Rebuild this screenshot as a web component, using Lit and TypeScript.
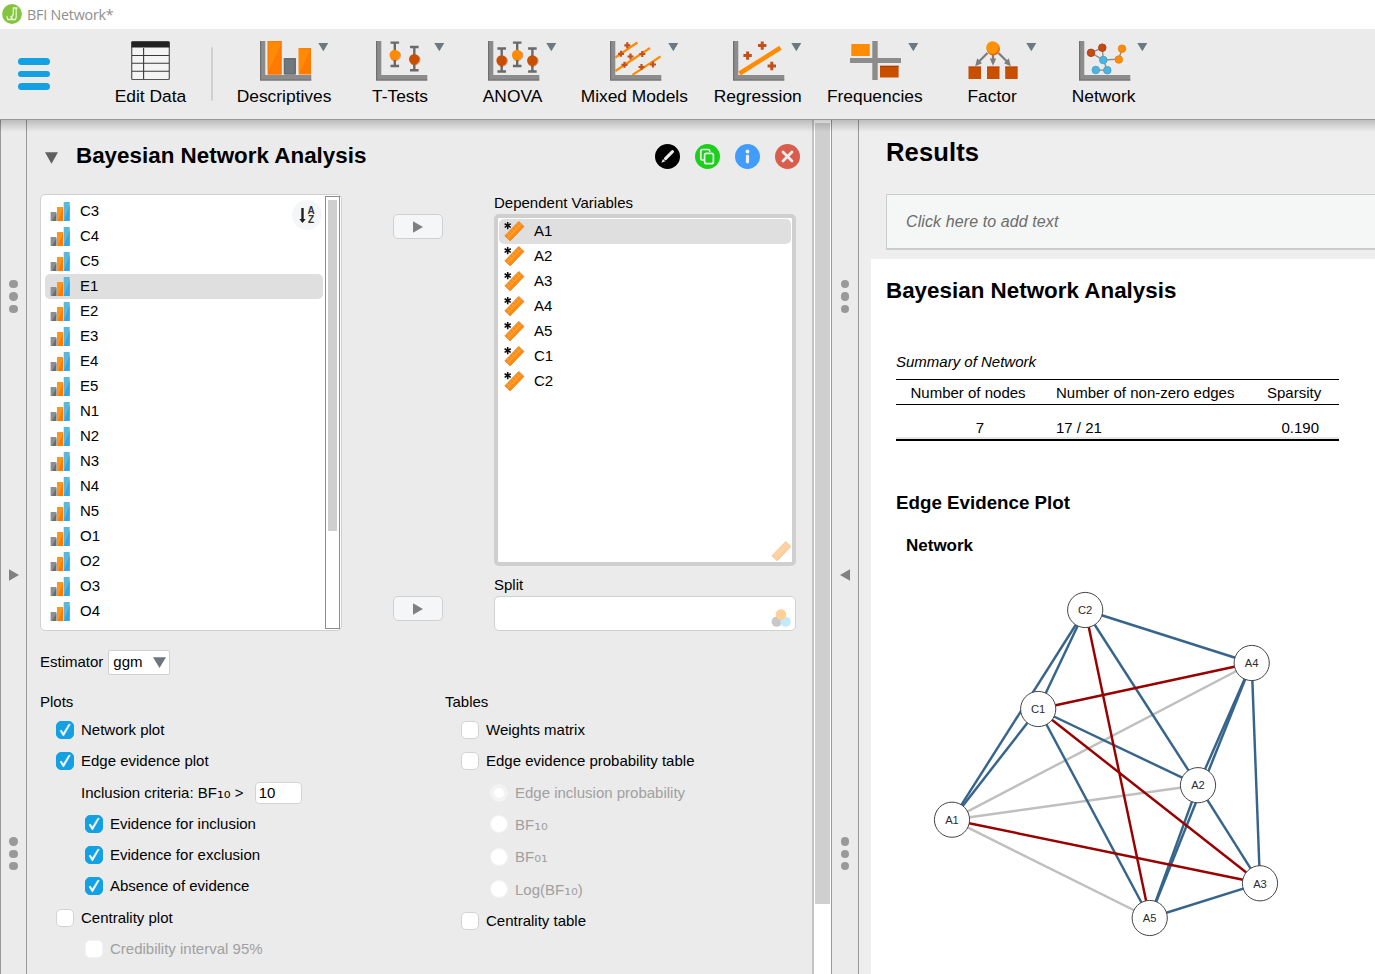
import { LitElement, html, svg, css, nothing } from "lit";
import { customElement, property } from "lit/decorators.js";

const GREY = "#8c8c8c";
const ORANGE = "#ff8c00";
const RUST = "#c94f00";

const axes = svg`<path d="M0 0h5.3v34H51.3v5.6H0z" fill=${GREY}/><path d="M.6 0v39h50.7" fill="none" stroke="#6f6f6f" stroke-width="1.2"/>`;

const whisker = (x: number, y1: number, y2: number, cy: number, fill: string) => svg`
  <path d="M${x - 4.3} ${y1}h8.6M${x - 4.3} ${y2}h8.6M${x} ${y1}V${y2}" stroke="#6a6a6a" stroke-width="2.4" fill="none"/>
  <circle cx=${x} cy=${cy} r="5.3" fill=${fill}/>
  <path d="M${x - 4} ${cy + 3.6}a5.3 5.3 0 0 0 8.6 -6.6" fill="none" stroke="#a83c00" stroke-opacity=".45" stroke-width="1"/>`;

const plus = (x: number, y: number, s: number, w: number) => svg`
  <path d="M${x - s} ${y}h${2 * s}M${x} ${y - s}v${2 * s}" stroke="#c2501a" stroke-width=${w} fill="none"/>`;

const dot = (x: number, y: number, fill: string, stroke: string) => svg`
  <circle cx=${x} cy=${y} r="3.8" fill=${fill} stroke=${stroke} stroke-width=".8"/>`;

const icons: Record<string, unknown> = {
  descriptives: svg`${axes}
    <path d="M7.7 0h14v33.5H7.7zM38.7 7H51v26.5H38.7z" fill="#ff7a00"/>
    <path d="M7.7 0h14v2L9.5 28H7.7zM38.7 7H51L40.5 30h-1.8z" fill="#ff8a06"/>
    <path d="M8.5 .6h12.4v32.6H8.5zM39.5 7.8H50.8" fill="none" stroke="#ff6a00" stroke-opacity=".4" stroke-width="1.4"/>
    <path d="M23.7 17h12.3v16.5H23.7z" fill="#6f787e"/><path d="M24.7 18h10.3v15H24.7z" fill="none" stroke="#5f696f" stroke-width="1"/>`,
  ttests: svg`${axes}${whisker(18.8, 1.6, 25, 14, ORANGE)}${whisker(38.3, 6, 29.2, 18.3, RUST)}`,
  anova: svg`${axes}${whisker(13.7, 7.5, 30.5, 19.6, RUST)}${whisker(29.2, 1.6, 25, 14, ORANGE)}${whisker(44.4, 7.5, 30.5, 19.6, RUST)}`,
  mixed: svg`${axes}
    <path d="M5.4 16.5L27.3 1.5M5.4 30L40 7M22.5 33.8L50.5 15.5" stroke=${ORANGE} stroke-width="2.2" fill="none"/>
    ${plus(17.3, 4.3, 3, 2.2)}${plus(11, 12.8, 3, 2.2)}${plus(20.5, 15.5, 3, 2.2)}${plus(32.3, 13, 3, 2.2)}${plus(14.5, 23.8, 3, 2.2)}${plus(31.5, 26, 3, 2.2)}${plus(43, 23.5, 3, 2.2)}`,
  regression: svg`${axes}
    <path d="M6.500 32.500L47.500 6.800" stroke=${ORANGE} stroke-width="4.600" fill="none"/>
    ${plus(14.6, 14.6, 4.2, 3)}${plus(29.2, 4.6, 4.2, 3)}${plus(38.8, 25, 4.2, 3)}`,
  frequencies: svg`
    <path d="M22.300 0h5.400v39h-5.400z" fill=${GREY}/><path d="M0 17h51v5H0z" fill=${GREY}/>
    <path d="M1.300 3h18.500v12H1.300z" fill=${ORANGE}/><path d="M30 24.800h18.600v11.700H30z" fill=${RUST}/>
    <path d="M30 25.400h18.600" stroke="#a83c00" stroke-width="1.200"/>`,
  factor: svg`
    <path d="M19.500 12L10 21.500M25 13v8.500M30.500 12L40 21.500" stroke="#7d7d7d" stroke-width="2.200" fill="none"/>
    <path d="M7.200 25.300l2-8 4.800 5zM42.800 25.300l-2-8-4.800 5zM21.800 17.500h6.400l-3.200 7.200z" fill="#7d7d7d"/>
    <circle cx="25.300" cy="7.800" r="6.700" fill="#e86a00"/><circle cx="24.500" cy="6.500" r="6.300" fill="#ff9208"/>
    <path d="M.5 25.500H13V38H.5zM19 25.500h12.500V38H19zM37.200 25.500h12.500V38H37.200z" fill=${RUST}/>
    <path d="M.5 26H13M19 26h12.500M37.200 26h12.500" stroke="#a83c00" stroke-opacity=".6"/>`,
  network: svg`${axes}
    <path d="M12 11.800L23.300 6.700 24.300 19zM24.300 19l15.500-.8L43 7.700M24.300 19l4 10.200H16.800" stroke="#8a8a8a" stroke-width="1.300" fill="none"/>
    ${dot(12, 11.8, "#c94a10", "#a33a0a")}${dot(23.3, 6.7, "#c94a10", "#a33a0a")}${dot(43, 7.7, "#ff8c08", "#e87c10")}${dot(39.8, 18.5, "#ff8c08", "#e87c10")}
    ${dot(24.3, 19, "#4fb3dd", "#3aa0cc")}${dot(16.8, 29, "#4fb3dd", "#3aa0cc")}${dot(28.3, 29.2, "#4fb3dd", "#3aa0cc")}`,
};

const ribbon = [
  { id: "descriptives", label: "Descriptives" },
  { id: "ttests", label: "T-Tests" },
  { id: "anova", label: "ANOVA" },
  { id: "mixed", label: "Mixed Models" },
  { id: "regression", label: "Regression" },
  { id: "frequencies", label: "Frequencies" },
  { id: "factor", label: "Factor" },
  { id: "network", label: "Network" },
];

@customElement("ribbon-bar")
export class RibbonBar extends LitElement {
  static styles = css`
    :host { display: flex; box-sizing: border-box; height: 91px; background: #ebebeb; border-bottom: 1px solid #989898; font: 17.4px/20px "Liberation Sans", Arial, sans-serif; color: #000; }
    .menu { width: 32px; padding: 29px 0 0 18px; display: flex; flex-direction: column; gap: 6px; }
    .menu span { height: 6.5px; border-radius: 4px; background: #14a1e3; }
    .edit { width: 120px; margin-left: 40.5px; }
    .sep { width: 2.5px; height: 54px; margin: 18px 13.3px 0 0; background: #d0d0d0; border-radius: 1px; }
    .item { display: flex; flex-direction: column; align-items: center; padding-top: 12px; white-space: nowrap; box-sizing: border-box; }
    .items { display: grid; grid-template-columns: 115.5px 116.5px 108.5px 135px 112px 122px 112.500px 110.5px; }
    svg { display: block; width: 50px; height: 40px; overflow: visible; margin-bottom: 5px; }
    .items svg { margin-left: 1px; }
    .table { width: 39px; }
  `;
  render() {
    return html`
      <div class="menu"><span></span><span></span><span></span></div>
      <div class="item edit">
        <svg class="table" viewBox="0 0 39 40">
          <rect x=".7" y=".7" width="37.600" height="37.800" rx="1" fill="#f4f4f4" stroke="#555" stroke-width="1.200"/>
          <path d="M.5 .8h38v5.800H.5z" fill="#222"/>
          <path d="M1 14.500h37M1 22.300h37M1 30.300h37M12.600 7v31" stroke="#3a3a3a" stroke-width="1.100" fill="none"/>
        </svg>
        <span>Edit Data</span>
      </div>
      <div class="sep"></div>
      <div class="items">
        ${ribbon.map((r) => html`<div class="item">
          <svg viewBox="0 0 50 40">${icons[r.id]}<path d="M58.300 2h10l-5 8.200z" fill="#6b7a82"/></svg>
          <span>${r.label}</span>
        </div>`)}
      </div>`;
  }
}

@customElement("split-handle")
export class SplitHandle extends LitElement {
  @property() dir = "right";
  static styles = css`
    :host { display: flex; flex-direction: column; align-items: center; box-sizing: border-box; width: 27px; border-left: 1px solid #989898; border-right: 1px solid #989898; background: #ebebeb; padding-top: 160px; }
    .dots { display: flex; flex-direction: column; gap: 4px; }
    .dots i { width: 8.4px; height: 8.4px; border-radius: 50%; background: #999; }
    svg { display: block; width: 10px; height: 12px; margin: 255.5px 0 256.5px; }
  `;
  render() {
    const dots = html`<div class="dots"><i></i><i></i><i></i></div>`;
    return html`${dots}
      <svg viewBox="0 0 10 12"><path d=${this.dir === "right" ? "M0 0.300l10 5.700-10 5.700z" : "M10 .3L0 6l10 5.700z"} fill="#808080"/></svg>
      ${dots}`;
  }
}

const ordinal = html`<svg class="ico" width="20" height="19" viewBox="0 0 20 19">
  <path d="M.6 10h5.800v9H.6z" fill="#8b8f92"/><path d="M6.400 11v8H2z" fill="#656d73"/>
  <path d="M7 5h6.100v14H7z" fill="#ff9518"/><path d="M13.100 6v13H8z" fill="#ff7b00"/>
  <path d="M13.700 0h6v19h-6z" fill="#5ab8dc"/><path d="M19.700 3v16h-6z" fill="#35a5e5"/></svg>`;

const rulerShape = svg`<g transform="rotate(-46 10.200 10.200)">
  <path d="M.4 6.700h20v7.300H.4z" fill="#ff8c0e" stroke="#d98a3a" stroke-width=".8"/>
  <path d="M3.500 6.900v3.200M6.800 6.900v3.200M10.200 6.900v3.200M13.600 6.900v3.200M17 6.900v3.200M1 10.400h18.800" stroke="#ffc98a" stroke-width=".5" fill="none"/></g>`;

const scale = html`<svg class="ico" width="21" height="20" viewBox="0 0 21 20">${rulerShape}
  <path d="M3.700 1v7.200M.6 2.800l6.200 3.600M6.800 2.800L.6 6.400" stroke="#fff" stroke-opacity=".7" stroke-width="2.600"/>
  <path d="M3.700 1v7.200M.6 2.800l6.200 3.600M6.800 2.800L.6 6.400" stroke="#111" stroke-width="1.600"/></svg>`;

const arrow = html`<button class="move"><svg width="10" height="12" viewBox="0 0 10 12"><path d="M0 .3L10 6 0 11.700z" fill="#808080"/></svg></button>`;

interface Opt { text: unknown; indent?: boolean; kind?: "check" | "radio" | "none"; on?: boolean; off?: boolean; }
const sub = (t: string) => html`<span class="sub">${t}</span>`;

const plots: Opt[] = [
  { text: "Network plot", on: true },
  { text: "Edge evidence plot", on: true },
  { text: html`Inclusion criteria: BF${sub("₁₀")} &gt; <span class="field">10</span>`, kind: "none" },
  { text: "Evidence for inclusion", on: true, indent: true },
  { text: "Evidence for exclusion", on: true, indent: true },
  { text: "Absence of evidence", on: true, indent: true },
  { text: "Centrality plot" },
  { text: "Credibility interval 95%", indent: true, off: true },
];
const tables: Opt[] = [
  { text: "Weights matrix" },
  { text: "Edge evidence probability table" },
  { text: "Edge inclusion probability", kind: "radio", on: true, indent: true, off: true },
  { text: html`BF${sub("₁₀")}`, kind: "radio", indent: true, off: true },
  { text: html`BF${sub("₀₁")}`, kind: "radio", indent: true, off: true },
  { text: html`Log(BF${sub("₁₀")})`, kind: "radio", indent: true, off: true },
  { text: "Centrality table" },
];

@customElement("analysis-form")
export class AnalysisForm extends LitElement {
  static styles = css`
    :host { display: block; box-sizing: border-box; width: 785px; padding-left: 13px; background: #ebebeb; font: 15px/16px "Liberation Sans", Arial, sans-serif; color: #000; white-space: nowrap; }
    .head { display: flex; align-items: center; height: 74px; width: 760px; }
    .head h1 { font-size: 22.4px; line-height: 26px; margin: 0 auto 0 18px; padding-bottom: 3px; }
    .head .tri { margin-left: 5px; margin-top: 1px; }
    .tools { display: flex; gap: 15px; padding-bottom: 1px; }
    .tools svg { display: block; }
    .vars { display: grid; grid-template-columns: 302px 50px 302px; column-gap: 51px; height: 437px; }
    .list { display: flex; box-sizing: border-box; background: #fff; border: 1px solid #d0d0d0; border-radius: 5px; height: 437px; }
    .rows { flex: 1; padding: 4px 2px 0 4px; position: relative; }
    .row { display: flex; align-items: center; height: 25px; border-radius: 5px; box-sizing: border-box; padding-left: 5px; gap: 10px; }
    .row span { padding-bottom: 2px; }
    .row.sel { background: #dfdfdf; }
    .sort { position: absolute; right: 3px; top: 5px; display: block; }
    .bar { box-sizing: border-box; width: 15px; height: 433px; margin: 1px 1px 0 0; border: 1px solid #8d8d8d; padding: 3px 2px; }
    .bar i { display: block; height: 331px; background: #cfcfcf; }
    .mid { display: flex; flex-direction: column; justify-content: space-between; padding: 20px 0 10px; }
    .move { display: flex; align-items: center; justify-content: center; width: 50px; height: 25px; box-sizing: border-box; background: #f5f6f8; border: 1px solid #d0d0d0; border-radius: 5px; padding: 0 1px 0 0; }
    .label { padding-top: 1px; height: 15px; }
    .dep { display: flex; flex-direction: column; box-sizing: border-box; height: 352px; margin: 4px 0 11px; padding: 1px; background: #fff; border: 4px solid #cfcfcf; border-radius: 5px; }
    .dep .row { gap: 9px; }
    .dep .row svg { margin-bottom: 2px; }
    .faded { opacity: .42; margin: auto 0 0 auto; display: block; }
    .split { box-sizing: border-box; height: 35px; margin-top: 3px; display: flex; justify-content: flex-end; align-items: flex-end; padding: 0 4px 3px; background: #fff; border: 1px solid #d0d0d0; border-radius: 5px; }
    .est { display: flex; align-items: center; gap: 5px; margin: 19px 0; height: 25px; }
    .est span { padding-bottom: 1px; }
    .select { display: flex; align-items: center; justify-content: space-between; box-sizing: border-box; width: 62px; height: 25px; padding: 0 3px 0 4px; background: #fff; border: 1px solid #d0d0d0; border-radius: 2px; }
    .opts { display: grid; grid-template-columns: 405px 1fr; }
    .group { padding: 4.500px 0 0 16px; }
    .opt { display: flex; align-items: center; height: 31.250px; gap: 7px; }
    .opt.in { padding-left: 29px; }
    .opt.none { padding-left: 25px; }
    .opt.tall { height: 32.300px; }
    .opt.tall .text { padding-top: 1.500px; }
    .off { color: #a0a0a0; }
    .box { box-sizing: border-box; width: 18px; height: 18px; border-radius: 5px; border: 1px solid #d3d3d3; background: #fff; }
    .box.on { background: #14a1e3; border-color: #14a1e3; }
    .off .box { border-color: #f4f4f4; }
    .box.radio { border-radius: 50%; }
    .box.radio.on { background: #fff; border: 4px solid #f3f3f3; }
    .box svg { display: block; width: 16px; height: 16px; }
    .sub { font: 17px/0 "DejaVu Sans", sans-serif; vertical-align: 0; }
    .field { display: inline-block; box-sizing: border-box; width: 47px; height: 22px; line-height: 20px; margin-left: 7px; padding-left: 3px; background: #fff; border: 1px solid #d3d3d3; border-radius: 4px; }
  `;

  private opt(o: Opt) {
    const kind = o.kind ?? "check";
    const tall = kind === "radio" && !o.on;
    return html`<div class="opt ${o.indent ? "in" : ""} ${kind} ${o.off ? "off" : ""} ${tall ? "tall" : ""}">
      ${kind === "none" ? nothing : html`<span class="box ${kind} ${o.on ? "on" : ""}">${o.on && kind === "check"
        ? html`<svg viewBox="0 0 16 16"><path d="M3 8.800L4.400 8 6.300 10.900 11.700 2.300H13.400L6.800 13.800H6z" fill="#fff" stroke="#fff" stroke-width=".4"/></svg>` : nothing}</span>`}
      <span class="text">${o.text}</span></div>`;
  }

  render() {
    const left = ["C3", "C4", "C5", "E1", "E2", "E3", "E4", "E5", "N1", "N2", "N3", "N4", "N5", "O1", "O2", "O3", "O4"];
    const right = ["A1", "A2", "A3", "A4", "A5", "C1", "C2"];
    return html`
      <div class="head">
        <svg class="tri" width="13" height="12" viewBox="0 0 13 12"><path d="M0 .3h13L6.500 11.700z" fill="#606060"/></svg>
        <h1>Bayesian Network Analysis</h1>
        <div class="tools">
          <svg width="25" height="25" viewBox="0 0 25 25"><circle cx="12.500" cy="12.500" r="12.500" fill="#000"/>
            <path d="M17.500 7.600L10.500 14.600" stroke="#eee" stroke-width="3" stroke-linecap="round"/><path d="M8 15l2.300 2.300L6.300 18.800z" fill="#eee"/></svg>
          <svg width="25" height="25" viewBox="0 0 25 25"><circle cx="12.500" cy="12.500" r="12.500" fill="#1bd01b"/>
            <path d="M9 16H7.500Q5.800 16 5.800 14.300V7.300Q5.800 5.500 7.500 5.500H13Q14.800 5.500 14.800 7.300V8" fill="none" stroke="#eee" stroke-width="1.700"/>
            <rect x="9.600" y="9.300" width="8.800" height="10.400" rx="2" fill="#1bd01b" stroke="#eee" stroke-width="1.700"/></svg>
          <svg width="25" height="25" viewBox="0 0 25 25"><circle cx="12.500" cy="12.500" r="12.500" fill="#429cfb"/>
            <circle cx="12.500" cy="7.500" r="1.900" fill="#eee"/><path d="M12.500 12v5.800" stroke="#eee" stroke-width="3.200" stroke-linecap="round"/></svg>
          <svg width="25" height="25" viewBox="0 0 25 25"><circle cx="12.500" cy="12.500" r="12.500" fill="#d95c4c"/>
            <path d="M8 8l9 9M17 8l-9 9" stroke="#eee" stroke-width="2.800" stroke-linecap="round"/></svg>
        </div>
      </div>
      <div class="vars">
        <div class="list">
          <div class="rows">
            ${left.map((v) => html`<div class="row ${v === "E1" ? "sel" : ""}">${ordinal}<span>${v}</span></div>`)}
            <svg class="sort" width="30" height="30" viewBox="0 0 30 30"><circle cx="15" cy="15" r="15" fill="#f5f6f8"/>
              <path d="M10.500 8v12" stroke="#222" stroke-width="2.400"/><path d="M7.300 19h6.400l-3.200 4z" fill="#222"/>
              <text x="19" y="14.300" text-anchor="middle" font-size="10" font-weight="bold" fill="#333">A</text><text x="19" y="23" text-anchor="middle" font-size="10" font-weight="bold" fill="#333">Z</text></svg>
          </div>
          <div class="bar"><i></i></div>
        </div>
        <div class="mid">${arrow}${arrow}</div>
        <div>
          <div class="label">Dependent Variables</div>
          <div class="dep">
            ${right.map((v) => html`<div class="row ${v === "A1" ? "sel" : ""}">${scale}<span>${v}</span></div>`)}
            <svg class="faded" width="20" height="20" viewBox="0 0 20 20">${rulerShape}</svg>
          </div>
          <div>Split</div>
          <div class="split"><svg width="20" height="18" viewBox="0 0 20 18">
            <circle cx="5.700" cy="12.600" r="5.200" fill="#c8c8c8"/><circle cx="14.600" cy="12.600" r="5.200" fill="#c2eafd"/><circle cx="10" cy="5.500" r="5.300" fill="#ffcf96"/></svg></div>
        </div>
      </div>
      <div class="est"><span>Estimator</span><div class="select"><span>ggm</span><svg width="13" height="11" viewBox="0 0 13 11"><path d="M0 .3h13L6.500 11z" fill="#6b7780"/></svg></div></div>
      <div class="opts">
        <div><div>Plots</div><div class="group">${plots.map((o) => this.opt(o))}</div></div>
        <div><div>Tables</div><div class="group">${tables.map((o) => this.opt(o))}</div></div>
      </div>`;
  }
}

const nodes: Record<string, [number, number]> = {
  C2: [214.2, 610], A4: [380.7, 663], C1: [167.2, 709], A2: [327, 785.2], A1: [81, 819.7], A3: [389, 883.3], A5: [278.7, 918],
};
const BLUE = "#36648b", RED = "#990000", SILVER = "#bfbfbf";
const edges: [string, string, string][] = [
  ["A1", "A4", SILVER], ["A1", "A2", SILVER], ["A1", "A5", SILVER],
  ["C2", "C1", BLUE], ["C2", "A1", BLUE], ["C1", "A1", BLUE], ["C2", "A4", BLUE], ["C2", "A2", BLUE], ["C1", "A2", BLUE],
  ["C1", "A5", BLUE], ["A4", "A2", BLUE], ["A4", "A5", BLUE], ["A4", "A3", BLUE], ["A2", "A3", BLUE], ["A2", "A5", BLUE], ["A5", "A3", BLUE],
  ["C1", "A4", RED], ["C2", "A5", RED], ["C1", "A3", RED], ["A1", "A3", RED],
];

@customElement("results-pane")
export class ResultsPane extends LitElement {
  static styles = css`
    :host { display: block; box-sizing: border-box; background: #eee; padding-left: 12px; font: 15px/18px "Liberation Sans", Arial, sans-serif; color: #000; white-space: nowrap; overflow: hidden; }
    h1 { font-size: 25.6px; line-height: 30px; margin: 0; padding: 17px 0 27px 15px; letter-spacing: .1px; }
    .note { box-sizing: border-box; height: 56px; margin: 0 0 9px 15px; padding-left: 19px; line-height: 53px; font-size: 16px; letter-spacing: .1px; font-style: italic; color: #6c6c6c; background: #f5f7f6; border: 1px solid #ccc; border-bottom-width: 2px; border-right: 0; }
    .sheet { background: #fff; height: 715px; padding: 18px 0 0 15px; box-sizing: border-box; }
    h2 { font-size: 22.4px; line-height: 28px; margin: 0 0 48px; }
    .summary { width: 443px; margin-left: 10px; border-collapse: collapse; table-layout: fixed; }
    caption { text-align: left; font-style: italic; padding-bottom: 8px; }
    th { font-weight: normal; height: 23px; padding: 1px 0 0; border-top: 1px solid #000; border-bottom: 1px solid #000; text-align: left; }
    td { height: 18px; padding: 14px 0 0; }
    .pad td { height: 2px; padding: 0; background: #e6e6e6; border-bottom: 2px solid #000; }
    th:nth-child(1) { width: 160px; box-sizing: border-box; padding-left: 14.500px; }
    th:nth-child(2) { width: 211px; }
    td.n { text-align: right; padding-right: 72px; }
    td.s { text-align: right; padding-right: 20px; }
    h3 { font-size: 18.750px; line-height: 22px; margin: 51px 0 22px 10px; }
    h4 { font-size: 17px; line-height: 20px; margin: 0 0 0 20px; }
    svg { display: block; margin: 24px 0 0 -15px; }
  `;
  render() {
    return html`
      <h1>Results</h1>
      <div class="note">Click here to add text</div>
      <div class="sheet">
        <h2>Bayesian Network Analysis</h2>
        <table class="summary">
          <caption>Summary of Network</caption>
          <thead><tr><th>Number of nodes</th><th>Number of non-zero edges</th><th>Sparsity</th></tr></thead>
          <tbody><tr><td class="n">7</td><td>17 / 21</td><td class="s">0.190</td></tr>
          <tr class="pad"><td colspan="3"></td></tr></tbody>
        </table>
        <h3>Edge Evidence Plot</h3>
        <h4>Network</h4>
        <svg width="500" height="380" viewBox="0 580 500 380">
          ${edges.map(([a, b, c]) => svg`<line x1=${nodes[a][0]} y1=${nodes[a][1]} x2=${nodes[b][0]} y2=${nodes[b][1]} stroke=${c} stroke-width="2.450"/>`)}
          ${Object.entries(nodes).map(([k, [x, y]]) => svg`<circle cx=${x} cy=${y} r="17.600" fill="#fff" stroke="#444" stroke-width="1"/>
            <text x=${x} y=${y + 4.2} text-anchor="middle" font-size="11.200" fill="#2b2b2b">${k}</text>`)}
        </svg>
      </div>`;
  }
}

@customElement("app-root")
export class AppRoot extends LitElement {
  static styles = css`
    :host { display: flex; flex-direction: column; width: 1375px; height: 974px; overflow: hidden; background: #fff; }
    .title { display: flex; align-items: center; gap: 5px; height: 29px; padding-left: 2px; font: 14.300px/20px "Open Sans", "Noto Sans", sans-serif; letter-spacing: -.22px; color: #8f8f8f; }
    .title svg { margin-bottom: 2px; }
    .work { position: relative; flex: 1; display: grid; grid-template-columns: 27px 785px 19px 28px 1fr; grid-template-rows: 854px; }
    .shade { position: absolute; left: 0; right: 0; top: 0; height: 12px; background: linear-gradient(rgba(0, 0, 0, .2), rgba(0, 0, 0, 0)); }
    .scroll { box-sizing: border-box; background: #fff; border-left: 2px solid #c4c4c4; padding: 3px 1px 0; }
    .scroll i { display: block; height: 781px; background: #cfcfcf; }
    split-handle.wide { width: 28px; }
  `;
  render() {
    return html`
      <div class="title">
        <svg width="20" height="20" viewBox="0 0 20 20"><circle cx="10" cy="10" r="9.900" fill="#85c441"/>
          <path d="M10.800 4h4.700M14.200 4.200v8.600q0 1.600-1 2.700H5.800L4.800 12.300M11.300 4.500v5q0 3-3 3.500M10.500 13.500l-1.500 2" fill="none" stroke="#e8f5da" stroke-width="1.300"/></svg>
        <span>BFI Network*</span>
      </div>
      <ribbon-bar></ribbon-bar>
      <div class="work">
        <split-handle></split-handle>
        <analysis-form></analysis-form>
        <div class="scroll"><i></i></div>
        <split-handle class="wide" dir="left"></split-handle>
        <results-pane></results-pane>
        <div class="shade"></div>
      </div>`;
  }
}
